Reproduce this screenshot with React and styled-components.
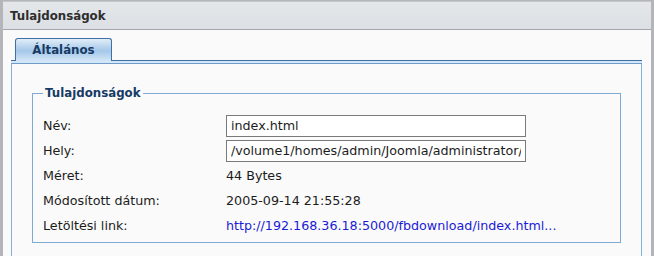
import React from 'react';
import styled, { createGlobalStyle } from 'styled-components';

const GlobalStyle = createGlobalStyle`
  html, body {
    margin: 0;
    padding: 0;
    background: #b3b5b8;
    overflow: hidden;
  }

  body {
    font-family: 'DejaVu Sans', Verdana, sans-serif;
  }
`;

const Desktop = styled.div`
  width: 654px;
  height: 256px;
  padding: 1px 3px 0 3px;
  box-sizing: border-box;
`;

const Window = styled.div`
  height: 100%;
  background: #fafafa;
  border-top: 1px solid #c4c7ca;
  box-sizing: border-box;
`;

const TitleBar = styled.div`
  height: 27px;
  display: flex;
  align-items: center;
  padding-left: 7px;
  background: linear-gradient(#e4e7ea, #dcdfe3);
  border-bottom: 1px solid #a4a6a9;
  color: #2e2e2e;
  font-size: 11.8px;
  font-weight: bold;
`;

const Body = styled.div`
  padding: 8px 9px 0 8px;
`;

const TabRow = styled.div`
  display: flex;
  padding-left: 4px;
`;

/* the tab overlaps the strip's top line so it opens into the panel */
const Tab = styled.div`
  position: relative;
  z-index: 1;
  width: 97px;
  height: 23px;
  margin-bottom: -1px;
  display: flex;
  align-items: center;
  justify-content: center;
  padding-bottom: 1px;
  box-sizing: border-box;
  border: 1px solid #3f70a3;
  border-bottom: none;
  border-radius: 3px 3px 0 0;
  background: linear-gradient(#e2eef9 0%, #b3d0ec 40%, #a6c8e9 55%, #d3e6f7 100%);
  color: #173b66;
  font-size: 11.8px;
  font-weight: bold;
`;

const Panel = styled.div`
  border-left: 1px solid #84b0d6;
  border-right: 1px solid #84b0d6;
  height: 200px;
`;

const PanelStrip = styled.div`
  height: 2px;
  border-top: 1px solid #3f70a3;
  border-bottom: 1px solid #6f9ccb;
  background: #d3e6f7;
  margin: 0 -1px;
`;

const Fieldset = styled.fieldset`
  margin: 22px 20px 0 20px;
  padding: 13px 10px 4px 10px;
  border: 1px solid #7eaad3;
  min-width: 0;
`;

const Legend = styled.legend`
  padding: 0 2px;
  line-height: 14px;
  color: #173b66;
  font-size: 11.8px;
  font-weight: bold;
`;

const Rows = styled.div`
  display: grid;
  grid-template-columns: 183px 1fr;
  grid-auto-rows: 25px;
  align-items: center;
  font-size: 12.7px;
  color: #1c1c1c;
`;

const Label = styled.div`
  line-height: 16px;
`;

const Value = styled.div`
  line-height: 16px;
  white-space: nowrap;
  color: ${({ $link }) => ($link ? '#1b1bd6' : '#1c1c1c')};
`;

const Field = styled.input`
  width: 300px;
  height: 22px;
  box-sizing: border-box;
  border: 1px solid #7a7a7a;
  padding: 0 4px;
  margin: 0;
  background: #ffffff;
  font-family: 'DejaVu Sans', Verdana, sans-serif;
  font-size: 12.7px;
  color: #1c1c1c;
  outline: none;
`;

const rows = [
  { label: 'Név:', input: 'index.html' },
  { label: 'Hely:', input: '/volume1/homes/admin/Joomla/administrator/' },
  { label: 'Méret:', text: '44 Bytes' },
  { label: 'Módosított dátum:', text: '2005-09-14 21:55:28' },
  {
    label: 'Letöltési link:',
    text: 'http://192.168.36.18:5000/fbdownload/index.html...',
    link: true,
  },
];

const App = () => (
  <>
    <GlobalStyle />
    <Desktop>
      <Window>
        <TitleBar>Tulajdonságok</TitleBar>
        <Body>
          <TabRow>
            <Tab>Általános</Tab>
          </TabRow>
          <Panel>
            <PanelStrip />
            <Fieldset>
              <Legend>Tulajdonságok</Legend>
              <Rows>
                {rows.map((row) => (
                  <React.Fragment key={row.label}>
                    <Label>{row.label}</Label>
                    {row.input ? (
                      <Field readOnly value={row.input} />
                    ) : (
                      <Value $link={row.link}>{row.text}</Value>
                    )}
                  </React.Fragment>
                ))}
              </Rows>
            </Fieldset>
          </Panel>
        </Body>
      </Window>
    </Desktop>
  </>
);

export default App;
